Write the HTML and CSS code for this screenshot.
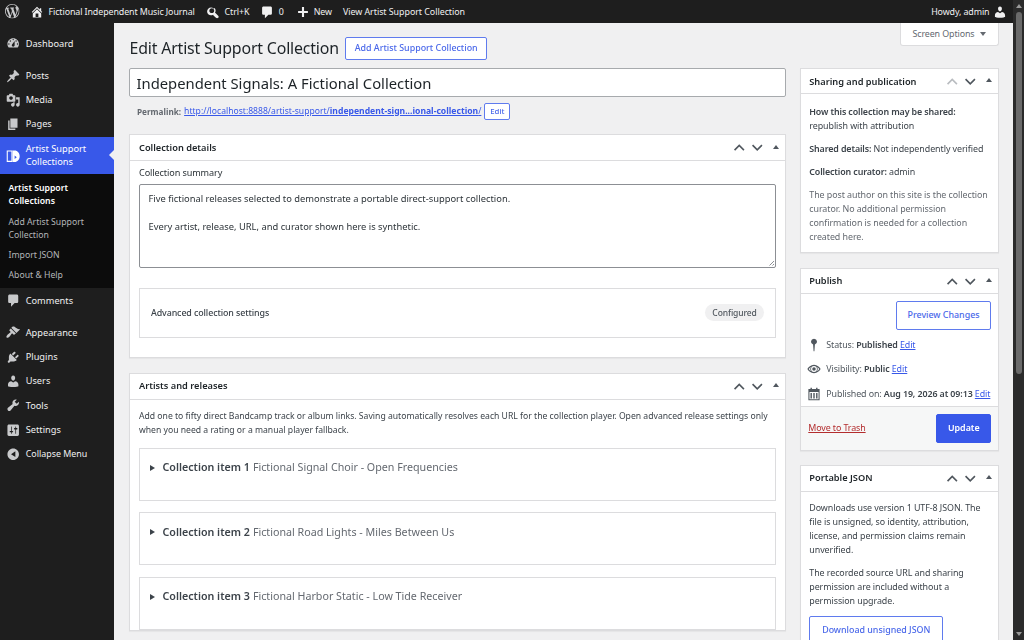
FILE: index.html
```html
<!DOCTYPE html>
<html lang="en">
<head>
<meta charset="utf-8">
<title>Edit Artist Support Collection</title>
<link rel="stylesheet" href="styles.css">
</head>
<body>
<svg class="defs" width="0" height="0" aria-hidden="true">
<symbol id="i-wp" viewBox="0 0 20 20"><path d="M20 10c0-5.51-4.49-10-10-10C4.48 0 0 4.49 0 10c0 5.52 4.48 10 10 10 5.51 0 10-4.48 10-10zM7.78 15.37L4.37 6.22c.55-.02 1.17-.08 1.17-.08.5-.06.44-1.13-.06-1.11 0 0-1.45.11-2.37.11-.18 0-.37 0-.58-.01C4.12 2.69 6.87 1.11 10 1.11c2.33 0 4.45.87 6.05 2.34-.68-.11-1.65.39-1.65 1.58 0 .74.45 1.36.9 2.1.35.61.55 1.36.55 2.46 0 1.49-1.4 5-1.4 5l-3.03-8.37c.54-.02.82-.17.82-.17.5-.05.44-1.25-.06-1.22 0 0-1.44.12-2.38.12-.87 0-2.33-.12-2.33-.12-.5-.03-.56 1.2-.06 1.22l.92.08 1.26 3.41zM17.41 10c.24-.64.74-1.87.43-4.25.7 1.29 1.05 2.71 1.05 4.25 0 3.29-1.73 6.24-4.4 7.78.97-2.59 1.94-5.2 2.92-7.78zM6.1 18.09C3.12 16.65 1.11 13.53 1.11 10c0-1.3.23-2.48.72-3.59C3.25 10.3 4.67 14.2 6.1 18.09zm4.03-6.63l2.58 6.98c-.86.29-1.76.45-2.71.45-.79 0-1.57-.11-2.29-.33.81-2.38 1.62-4.74 2.42-7.1z"/></symbol>
<symbol id="i-home" viewBox="0 0 20 20"><path d="M16 8.5l1.53 1.53-1.06 1.06L10 4.62l-6.47 6.47-1.06-1.06L10 2.5l4 4v-2h2v4zm-6-2.46l6 5.99V18H4v-5.97zM12 17v-5H8v5h4z"/></symbol>
<symbol id="i-search" viewBox="0 0 20 20"><path d="M12.14 4.18c1.87 1.87 2.11 4.75.72 6.89.37.1.72.3 1.01.59l3.54 3.54c.88.88.88 2.3 0 3.18-.88.88-2.3.88-3.18 0l-3.54-3.54c-.29-.29-.49-.64-.59-1.01-2.14 1.39-5.02 1.15-6.89-.72-2.15-2.15-2.15-5.63 0-7.78 2.15-2.3 5.78-2.3 7.93-.15v-.05zm-1.41 6.36c1.36-1.37 1.36-3.58 0-4.95-1.37-1.37-3.59-1.37-4.95 0-1.37 1.37-1.37 3.58 0 4.95 1.36 1.37 3.58 1.37 4.95 0z"/></symbol>
<symbol id="i-comment" viewBox="0 0 20 20"><path d="M5 2h10c1.1 0 2 .9 2 2v8c0 1.1-.9 2-2 2h-3l-5 5v-5H5c-1.1 0-2-.9-2-2V4c0-1.1.9-2 2-2z"/></symbol>
<symbol id="i-plus" viewBox="0 0 20 20"><path d="M8.5 3h3v5.5H17v3h-5.5V17h-3v-5.5H3v-3h5.5z"/></symbol>
<symbol id="i-user" viewBox="0 0 20 20"><path d="M10 9.25c-2.27 0-2.73-3.44-2.73-3.44C7 4.02 7.82 2 9.97 2c2.16 0 2.98 2.02 2.71 3.81 0 0-.41 3.44-2.68 3.44zm0 2.57L12.72 10c2.39 0 4.52 2.33 4.52 4.53v2.49s-3.65 1.13-7.24 1.13c-3.65 0-7.24-1.13-7.24-1.13v-2.49c0-2.25 1.94-4.48 4.47-4.48z"/></symbol>
<symbol id="i-dash" viewBox="0 0 20 20"><path fill-rule="evenodd" d="M3.76 16h12.48c1.1-1.37 1.76-3.11 1.76-5 0-4.42-3.58-8-8-8s-8 3.58-8 8c0 1.89.66 3.63 1.76 5zM10 4c.55 0 1 .45 1 1s-.45 1-1 1-1-.45-1-1 .45-1 1-1zM6 6c.55 0 1 .45 1 1s-.45 1-1 1-1-.45-1-1 .45-1 1-1zm8 0c.55 0 1 .45 1 1s-.45 1-1 1-1-.45-1-1 .45-1 1-1zm-5.37 5.55L12 7v6c0 1.1-.9 2-2 2s-2-.9-2-2c0-.57.24-1.08.63-1.45zM4 10c.55 0 1 .45 1 1s-.45 1-1 1-1-.45-1-1 .45-1 1-1zm12 0c.55 0 1 .45 1 1s-.45 1-1 1-1-.45-1-1 .45-1 1-1z"/></symbol>
<symbol id="i-post" viewBox="0 0 20 20"><path d="M10.44 3.02l1.82-1.82 6.36 6.35-1.83 1.82c-1.05-.68-2.48-.57-3.41.36l-.75.75c-.92.93-1.04 2.35-.35 3.41l-1.83 1.82-2.41-2.41-2.8 2.79c-.42.42-3.38 2.71-3.8 2.29s1.86-3.39 2.28-3.81l2.79-2.79L4.1 9.36l1.83-1.82c1.05.69 2.48.57 3.4-.36l.75-.75c.93-.92 1.05-2.35.36-3.41z"/></symbol>
<symbol id="i-media" viewBox="0 0 20 20"><path fill-rule="evenodd" d="M13 11V4c0-.55-.45-1-1-1h-1.67L9 1H5L3.67 3H2c-.55 0-1 .45-1 1v7c0 .55.45 1 1 1h10c.55 0 1-.45 1-1zM7 4.5c1.38 0 2.5 1.12 2.5 2.5S8.38 9.5 7 9.5 4.5 8.38 4.5 7 5.62 4.5 7 4.5zM14 6h5v10.5c0 1.38-1.12 2.5-2.5 2.5S14 17.88 14 16.5s1.12-2.5 2.5-2.5c.17 0 .34.02.5.05V9h-3V6zm-4 8.05V13h2v3.5c0 1.38-1.12 2.5-2.5 2.5S7 17.88 7 16.5 8.12 14 9.5 14c.17 0 .34.02.5.05z"/></symbol>
<symbol id="i-page" viewBox="0 0 20 20"><path d="M6 15V2h10v13H6zm-1 1h8v2H3V5h2v11z"/></symbol>
<symbol id="i-collection" viewBox="0 0 20 20"><path fill-rule="evenodd" d="M1 2h8v16H1zM2.500 3.500v13h5v-13z"/><path fill-rule="evenodd" d="M9 2h3c4 0 7 3.500 7 8s-3 8-7 8H9zM12 9l0 5 3-2.500z"/></symbol>
<symbol id="i-brush" viewBox="0 0 20 20"><path d="M14.480 11.060L7.410 3.990l1.500-1.500c.5-.56 2.300-.47 3.510.32 1.210.8 1.430 1.280 2.910 2.100 1.180.64 2.450 1.260 4.450.85zM13.770 11.770L6.700 4.700 4.930 6.470c-.39.39-.39 1.020 0 1.410l1.060 1.060c.39.39.39 1.030 0 1.420-.6.6-1.430 1.110-2.210 1.690-.35.26-.7.53-1.010.84-1.340 1.340-2.270 2.920-2.270 3.760 0 .6.500 1.100 1.100 1.100.84 0 2.420-.93 3.760-2.270.31-.31.58-.66.84-1.010.58-.78 1.090-1.610 1.690-2.210.39-.39 1.030-.39 1.420 0l1.060 1.060c.39.39 1.020.39 1.410 0z"/></symbol>
<symbol id="i-plug" viewBox="0 0 20 20"><path d="M13.110 4.360L9.870 7.600 8 5.730l3.240-3.240c.35-.34 1.050-.2 1.560.32.52.51.66 1.210.31 1.550zm-8 1.770l.91-1.120 9.010 9.010-1.190.84c-.71.71-2.630 1.160-3.820 1.160H6.140L4.900 17.260c-.59.59-1.540.59-2.120 0-.59-.58-.59-1.530 0-2.120l1.240-1.240v-3.880c0-1.130.4-3.190 1.090-3.890zm7.260 3.970l3.240-3.240c.34-.35 1.040-.21 1.550.31.52.51.66 1.210.31 1.550l-3.240 3.250z"/></symbol>
<symbol id="i-tool" viewBox="0 0 20 20"><path d="M16.680 9.770c-1.340 1.340-3.300 1.670-4.950.99l-5.410 6.520c-.99.99-2.590.99-3.580 0s-.99-2.59 0-3.570l6.520-5.420c-.68-1.650-.35-3.610.99-4.950 1.280-1.280 3.120-1.620 4.720-1.060l-2.890 2.890 2.820 2.820 2.860-2.870c.53 1.580.18 3.390-1.080 4.670z"/></symbol>
<symbol id="i-set" viewBox="0 0 20 20"><path fill-rule="evenodd" d="M18 16V4c0-1.100-.9-2-2-2H4c-1.100 0-2 .9-2 2v12c0 1.100.9 2 2 2h12c1.100 0 2-.9 2-2zM8 11h1c.55 0 1 .45 1 1s-.45 1-1 1H8v1.500c0 .28-.22.5-.5.5s-.5-.22-.5-.5V13H6c-.55 0-1-.45-1-1s.45-1 1-1h1V5.500c0-.28.22-.5.5-.5s.5.22.5.5V11zm5-2h-1c-.55 0-1-.45-1-1s.45-1 1-1h1V5.500c0-.28.22-.5.5-.5s.5.22.5.5V7h1c.55 0 1 .45 1 1s-.45 1-1 1h-1v5.500c0 .28-.22.5-.5.5s-.5-.22-.5-.5V9z"/></symbol>
<symbol id="i-collapse" viewBox="0 0 20 20"><path fill-rule="evenodd" d="M18 10c0-4.420-3.580-8-8-8s-8 3.580-8 8 3.580 8 8 8 8-3.580 8-8zM13 6v8L7 10z"/></symbol>
<symbol id="i-up" viewBox="0 0 20 20"><path d="M2.500 14.500L10 7l7.500 7.500" fill="none" stroke="currentColor" stroke-width="2.600"/></symbol>
<symbol id="i-down" viewBox="0 0 20 20"><path d="M2.500 6.500L10 14l7.500-7.500" fill="none" stroke="currentColor" stroke-width="2.600"/></symbol>
<symbol id="i-pin" viewBox="0 0 20 20"><path d="M10 1a4.300 4.300 0 0 1 1.300 8.400L10.600 19H9.400L8.700 9.400A4.300 4.300 0 0 1 10 1z"/></symbol>
<symbol id="i-eye" viewBox="0 0 20 20"><path fill-rule="evenodd" d="M10 4c4.500 0 8 3.400 9.500 6-1.500 2.600-5 6-9.500 6S2 12.600.5 10C2 7.400 5.500 4 10 4zm0 1.800a4.200 4.200 0 1 0 0 8.400 4.200 4.200 0 0 0 0-8.400zM2.500 10c.8 1.100 1.800 2.200 3 3a5.500 5.500 0 0 1 0-6c-1.200.8-2.200 1.900-3 3zm12 3c1.200-.8 2.200-1.900 3-3-.8-1.100-1.800-2.200-3-3a5.500 5.500 0 0 1 0 6zM10 7.500a2.500 2.500 0 1 1 0 5 2.500 2.500 0 0 1 0-5z"/></symbol>
<symbol id="i-cal" viewBox="0 0 20 20"><path fill-rule="evenodd" d="M5 1h2v2h6V1h2v2h3v16H2V3h3zM3.500 7v10.500h13V7zM5 8.500h2v8H5zM9 8.500h2v8H9zM13 8.500h2v8h-2z"/></symbol>
</svg>

<div class="window">
  <div class="page">
    <header class="bar">
      <svg class="bar-logo"><use href="#i-wp"/></svg>
      <svg class="bar-icon home-icon"><use href="#i-home"/></svg>
      <span class="bar-text site-name">Fictional Independent Music Journal</span>
      <svg class="bar-icon search-icon"><use href="#i-search"/></svg>
      <span class="bar-text ctrl">Ctrl+K</span>
      <svg class="bar-icon comment-icon"><use href="#i-comment"/></svg>
      <span class="bar-text zero">0</span>
      <svg class="bar-icon plus-icon"><use href="#i-plus"/></svg>
      <span class="bar-text new">New</span>
      <span class="bar-text view">View Artist Support Collection</span>
      <span class="bar-text howdy">Howdy, admin</span>
      <svg class="bar-icon user-icon"><use href="#i-user"/></svg>
    </header>
    <div class="below">
      <nav class="menu">
        <a class="item first"><svg class="mi"><use href="#i-dash"/></svg><span>Dashboard</span></a>
        <a class="item sep"><svg class="mi"><use href="#i-post"/></svg><span>Posts</span></a>
        <a class="item"><svg class="mi"><use href="#i-media"/></svg><span>Media</span></a>
        <a class="item"><svg class="mi"><use href="#i-page"/></svg><span>Pages</span></a>
        <a class="item current"><svg class="mi"><use href="#i-collection"/></svg><span>Artist Support Collections</span><i class="arrow"></i></a>
        <div class="sub">
          <a class="sub-item on">Artist Support Collections</a>
          <a class="sub-item add-new">Add Artist Support Collection</a>
          <a class="sub-item">Import JSON</a>
          <a class="sub-item">About &amp; Help</a>
        </div>
        <a class="item"><svg class="mi"><use href="#i-comment"/></svg><span>Comments</span></a>
        <a class="item sep"><svg class="mi"><use href="#i-brush"/></svg><span>Appearance</span></a>
        <a class="item"><svg class="mi"><use href="#i-plug"/></svg><span>Plugins</span></a>
        <a class="item"><svg class="mi"><use href="#i-user"/></svg><span>Users</span></a>
        <a class="item"><svg class="mi"><use href="#i-tool"/></svg><span>Tools</span></a>
        <a class="item"><svg class="mi"><use href="#i-set"/></svg><span>Settings</span></a>
        <a class="item collapse"><svg class="mi"><use href="#i-collapse"/></svg><span>Collapse Menu</span></a>
      </nav>
      <main class="content">
        <button class="screen-options">Screen Options <i class="tri-down"></i></button>
        <div class="head">
          <h1>Edit Artist Support Collection</h1>
          <a class="btn add">Add Artist Support Collection</a>
        </div>
        <div class="columns">
          <div class="main-col">
            <div class="title-input">Independent Signals: A Fictional Collection</div>
            <div class="permalink">
              <b class="perma-label">Permalink:</b>
              <a class="link">http://localhost:8888/artist-support/<b>independent-sign...ional-collection</b>/</a>
              <a class="btn small">Edit</a>
            </div>
            <section class="card details">
              <div class="card-head">
                <h2>Collection details</h2>
                <div class="handles"><svg class="ch"><use href="#i-up"/></svg><svg class="ch"><use href="#i-down"/></svg><i class="tri-up"></i></div>
              </div>
              <div class="details-body">
                <div class="field-label">Collection summary</div>
                <div class="textarea">
                  <p>Five fictional releases selected to demonstrate a portable direct-support collection.</p>
                  <p>Every artist, release, URL, and curator shown here is synthetic.</p>
                  <i class="grip"></i>
                </div>
                <div class="advanced">
                  <span>Advanced collection settings</span>
                  <span class="pill">Configured</span>
                </div>
              </div>
            </section>
            <section class="card artists">
              <div class="card-head">
                <h2>Artists and releases</h2>
                <div class="handles"><svg class="ch"><use href="#i-up"/></svg><svg class="ch"><use href="#i-down"/></svg><i class="tri-up"></i></div>
              </div>
              <div class="artists-body">
                <p class="intro">Add one to fifty direct Bandcamp track or album links. Saving automatically resolves each URL for the collection player. Open advanced release settings only when you need a rating or a manual player fallback.</p>
                <div class="release"><i class="tri-right"></i><b>Collection item 1</b> Fictional Signal Choir - Open Frequencies</div>
                <div class="release"><i class="tri-right"></i><b>Collection item 2</b> Fictional Road Lights - Miles Between Us</div>
                <div class="release"><i class="tri-right"></i><b>Collection item 3</b> Fictional Harbor Static - Low Tide Receiver</div>
              </div>
            </section>
          </div>
          <aside class="side-col">
            <section class="card sharing">
              <div class="card-head side">
                <h2>Sharing and publication</h2>
                <div class="handles"><svg class="ch off"><use href="#i-up"/></svg><svg class="ch"><use href="#i-down"/></svg><i class="tri-up"></i></div>
              </div>
              <div class="side-body">
                <p><b>How this collection may be shared:</b><br>republish with attribution</p>
                <p><b>Shared details:</b> Not independently verified</p>
                <p><b>Collection curator:</b> admin</p>
                <p class="muted">The post author on this site is the collection curator. No additional permission confirmation is needed for a collection created here.</p>
              </div>
            </section>
            <section class="card">
              <div class="card-head side">
                <h2>Publish</h2>
                <div class="handles"><svg class="ch"><use href="#i-up"/></svg><svg class="ch"><use href="#i-down"/></svg><i class="tri-up"></i></div>
              </div>
              <div class="preview-row"><a class="btn preview">Preview Changes</a></div>
              <div class="meta"><svg class="meta-icon"><use href="#i-pin"/></svg><span>Status: <b>Published</b> <a class="link">Edit</a></span></div>
              <div class="meta"><svg class="meta-icon"><use href="#i-eye"/></svg><span>Visibility: <b>Public</b> <a class="link">Edit</a></span></div>
              <div class="meta"><svg class="meta-icon"><use href="#i-cal"/></svg><span>Published on: <b>Aug 19, 2026 at 09:13</b> <a class="link">Edit</a></span></div>
              <div class="publish-foot">
                <a class="trash">Move to Trash</a>
                <a class="btn primary">Update</a>
              </div>
            </section>
            <section class="card">
              <div class="card-head side">
                <h2>Portable JSON</h2>
                <div class="handles"><svg class="ch"><use href="#i-up"/></svg><svg class="ch"><use href="#i-down"/></svg><i class="tri-up"></i></div>
              </div>
              <div class="side-body">
                <p>Downloads use version 1 UTF-8 JSON. The file is unsigned, so identity, attribution, license, and permission claims remain unverified.</p>
                <p>The recorded source URL and sharing permission are included without a permission upgrade.</p>
                <a class="btn download">Download unsigned JSON</a>
              </div>
            </section>
          </aside>
        </div>
      </main>
    </div>
  </div>
  <div class="scrollbar">
    <i class="sb-up"></i>
    <div class="sb-track"><div class="sb-thumb"></div></div>
    <i class="sb-down"></i>
  </div>
</div>
</body>
</html>
```

FILE: styles.css
```css
* { box-sizing: border-box; }
html, body { margin: 0; height: 100%; overflow: hidden; }
body { font: 8.900px/13.870px "Noto Sans", sans-serif; letter-spacing: -.1px; color: #3c434a; background: #f0f0f1; }
.defs { position: absolute; }
p { margin: 0; }
svg { fill: currentColor; display: block; flex: none; }
i { display: block; flex: none; }

.window { display: flex; width: 1024px; height: 640px; overflow: hidden; filter: blur(.3px); }
.page { flex: 1; min-width: 0; display: flex; flex-direction: column; }

.scrollbar { width: 11px; background: #2b2b2b; display: flex; flex-direction: column; align-items: center; }
.sb-up { margin-top: 4px; border: 3.500px solid transparent; border-top: 0; border-bottom: 4px solid #9a9a9a; }
.sb-track { flex: 1; width: 100%; padding: 4px 2.500px 0; }
.sb-thumb { height: 362px; background: #6b6b6b; border-radius: 3px; }
.sb-down { margin-bottom: 4px; border: 3.500px solid transparent; border-bottom: 0; border-top: 4px solid #9a9a9a; }

/* admin bar */
.bar { height: 23px; flex: none; background: #1e1e1e; color: #f0f0f1; display: flex; align-items: center; padding-left: 5px; }
.bar-logo { width: 14.500px; height: 14.500px; color: #c8c9cb; }
.bar-icon { width: 14px; height: 14px; color: #f0f0f1; }
.bar-text { white-space: nowrap; }
.home-icon { margin-left: 10.500px; }
.site-name { margin-left: 4.500px; }
.search-icon { margin-left: 11.700px; }
.ctrl { margin-left: 4px; letter-spacing: -.05px; }
.comment-icon { margin-left: 10.200px; }
.zero { margin-left: 5px; }
.plus-icon { margin-left: 12px; }
.new { margin-left: 4px; }
.view { margin-left: 11px; letter-spacing: -.04px; }
.howdy { margin-left: auto; }
.user-icon { margin-left: 3.500px; margin-right: 6px; }

/* side menu */
.menu { width: 113.800px; flex: none; background: #1e1e1e; padding-top: 8.500px; color: #f0f0f1; font-size: 9.240px; letter-spacing: 0; }
.below { flex: 1; min-height: 0; display: flex; }
.item { display: flex; align-items: center; min-height: 24.300px; padding-left: 25.700px; position: relative; }
.sep { margin-top: 7.800px; }
.mi { position: absolute; left: 6px; top: 50%; margin-top: -7.200px; width: 14.400px; height: 14.400px; color: #c8c9cb; }
.current { background: #3858e9; color: #fff; padding: 4.500px 8px 6.500px 25.700px; line-height: 13px; margin-top: .800px; }
.current .mi { color: #fff; }
.collapse { font-size: 8.900px; }
.arrow { position: absolute; right: 0; top: 50%; margin-top: -5.500px; border: 5.500px solid transparent; border-left: 0; border-right: 5.500px solid #f0f0f1; }
.sub { background: #0c0c0c; padding: 4.300px 0 3.000px; font-size: 8.700px; }
.sub-item { display: block; padding: 3.650px 8px 3.650px 8.500px; line-height: 12.950px; color: #b4b6b9; }
.sub-item.on { color: #fff; font-weight: 600; padding-bottom: 4.400px; }
.sub-item.add-new { padding-bottom: 2.900px; }

/* content */
.content { flex: 1; min-width: 0; padding: 0 14.500px 0 15.700px; position: relative; overflow: hidden; }
.screen-options { position: absolute; top: 0; right: 14.500px; width: 99px; height: 22.500px; padding: 0; background: #fff; border: 1px solid #dcdcde; border-top: 0; border-radius: 0 0 3px 3px; font: inherit; letter-spacing: inherit; color: #646970; display: flex; align-items: center; justify-content: center; gap: 5px; }
.tri-down { border: 3px solid transparent; border-bottom: 0; border-top: 4px solid #646970; }
.head { display: flex; align-items: center; height: 23px; margin-top: 13.500px; }
h1 { margin: 0; font-size: 15.900px; font-weight: 400; line-height: 23px; letter-spacing: -.17px; color: #1d2327; }
.btn { display: inline-flex; align-items: center; justify-content: center; background: #fff; border: 1px solid #5f7bee; border-radius: 2px; color: #4a68ea; font-weight: 500; white-space: nowrap; letter-spacing: 0; }
.add { height: 23px; width: 142px; margin-left: 6.300px; }
.columns { display: flex; gap: 14.500px; margin-top: 8.500px; align-items: flex-start; }
.main-col { width: 656.300px; flex: none; }
.side-col { width: 198.500px; flex: none; }

.title-input { height: 29px; background: #fff; border: 1px solid #a7aaad; border-radius: 2px; padding-left: 6px; font-size: 14.800px; line-height: 28px; letter-spacing: 0; color: #1d2327; }
.permalink { display: flex; align-items: center; height: 17px; margin-top: 6px; padding-left: 7.500px; color: #646970; gap: 3px; font-size: 8.600px; letter-spacing: 0; }
.perma-label { font-size: 8.200px; }
.link { color: #3858e9; text-decoration: underline; }
.small { width: 26px; height: 17px; font-size: 7.800px; margin-left: 0; }

.card { background: #fff; border: 1px solid #dcdcde; box-shadow: 0 1px 1px rgba(0,0,0,.04); }
.card-head { display: flex; align-items: center; justify-content: space-between; height: 26px; border-bottom: 1px solid #dcdcde; padding-left: 8.500px; }
h2 { margin: 0; font-size: 9.240px; font-weight: 600; letter-spacing: 0; color: #1d2327; }
.handles { display: flex; align-items: center; color: #50575e; }
.ch { width: 12.500px; height: 12.500px; margin-right: 5.800px; }
.ch.off { color: #b9bcc0; }
.tri-up { border: 3px solid transparent; border-top: 0; border-bottom: 4px solid #50575e; margin: 0 5.500px 2px 4px; }

.details { margin-top: 14px; height: 224px; }
.details-body { padding: 4.500px 8.500px 0; }
.field-label { color: #2c3338; line-height: 14px; margin-bottom: 4.500px; font-size: 9.100px; }
.textarea { height: 83.500px; border: 1px solid #8c8f94; border-radius: 2px; padding: 6.500px 8.500px; color: #2c3338; position: relative; font-size: 9.360px; letter-spacing: 0; }
.textarea p + p { margin-top: 14.500px; }
.grip { position: absolute; right: 1px; bottom: 1px; width: 7px; height: 7px; background: repeating-linear-gradient(135deg, transparent 0 1.500px, #8c8f94 1.500px 2.200px); clip-path: polygon(100% 0, 100% 100%, 0 100%); }
.advanced { display: flex; align-items: center; justify-content: space-between; height: 49.500px; margin-top: 20.500px; border: 1px solid #dcdcde; padding: 0 11.500px 0 11px; color: #3c434a; font-weight: 500; }
.pill { height: 17px; border-radius: 9px; background: #f0f0f1; padding: 0 7px; display: flex; align-items: center; font-weight: 500; color: #50575e; font-size: 8.500px; }

.artists { margin-top: 14.500px; }
.artists-body { padding: 10.500px 8.500px 0; }
.intro { font-size: 8.650px; line-height: 13.800px; letter-spacing: 0; color: #3c434a; }
.release { height: 53px; margin-top: 10px; border: 1px solid #dcdcde; padding: 11.500px 11px 0 10.500px; font-size: 10.700px; line-height: 15px; letter-spacing: 0; color: #646970; display: flex; align-items: center; align-content: flex-start; flex-wrap: wrap; column-gap: 3px; }
.release + .release { margin-top: 11.500px; }
.release b { font-weight: 600; color: #3c434a; }
.tri-right { border: 3.500px solid transparent; border-right: 0; border-left: 5px solid #3c434a; margin-right: 4px; }

.card-head.side { height: 25.300px; padding-left: 8px; }
.sharing .card-head h2 { padding-top: 1px; }
.side-col .card + .card { margin-top: 14.500px; }
.side-body { padding: 9.700px 8px 0; letter-spacing: -.06px; }
.side-body p + p { margin-top: 9.200px; }
.side-body b { font-weight: 600; letter-spacing: -.12px; }
.muted { color: #646970; }
.sharing .side-body { height: 158px; padding-top: 10.900px; }
.preview-row { display: flex; justify-content: flex-end; padding: 7px 6.500px 0; }
.preview { width: 95.500px; height: 28.500px; }
.meta { display: flex; align-items: center; height: 24.500px; padding-left: 6px; gap: 5px; color: #50575e; }
.meta:nth-child(3) { margin-top: 2.700px; }
.meta-icon { width: 14px; height: 14px; color: #50575e; }
.meta b { font-weight: 600; color: #3c434a; }
.publish-foot { display: flex; justify-content: space-between; align-items: center; height: 44px; padding: 0 6.500px 0 7px; background: #f6f7f7; border-top: 1px solid #dcdcde; }
.trash { color: #b32d2e; text-decoration: underline; }
.primary { width: 55px; height: 28.500px; background: #3858e9; border-color: #3858e9; color: #fff; font-weight: 600; }
.download { width: 134px; height: 28.500px; margin-top: 8px; }
```
